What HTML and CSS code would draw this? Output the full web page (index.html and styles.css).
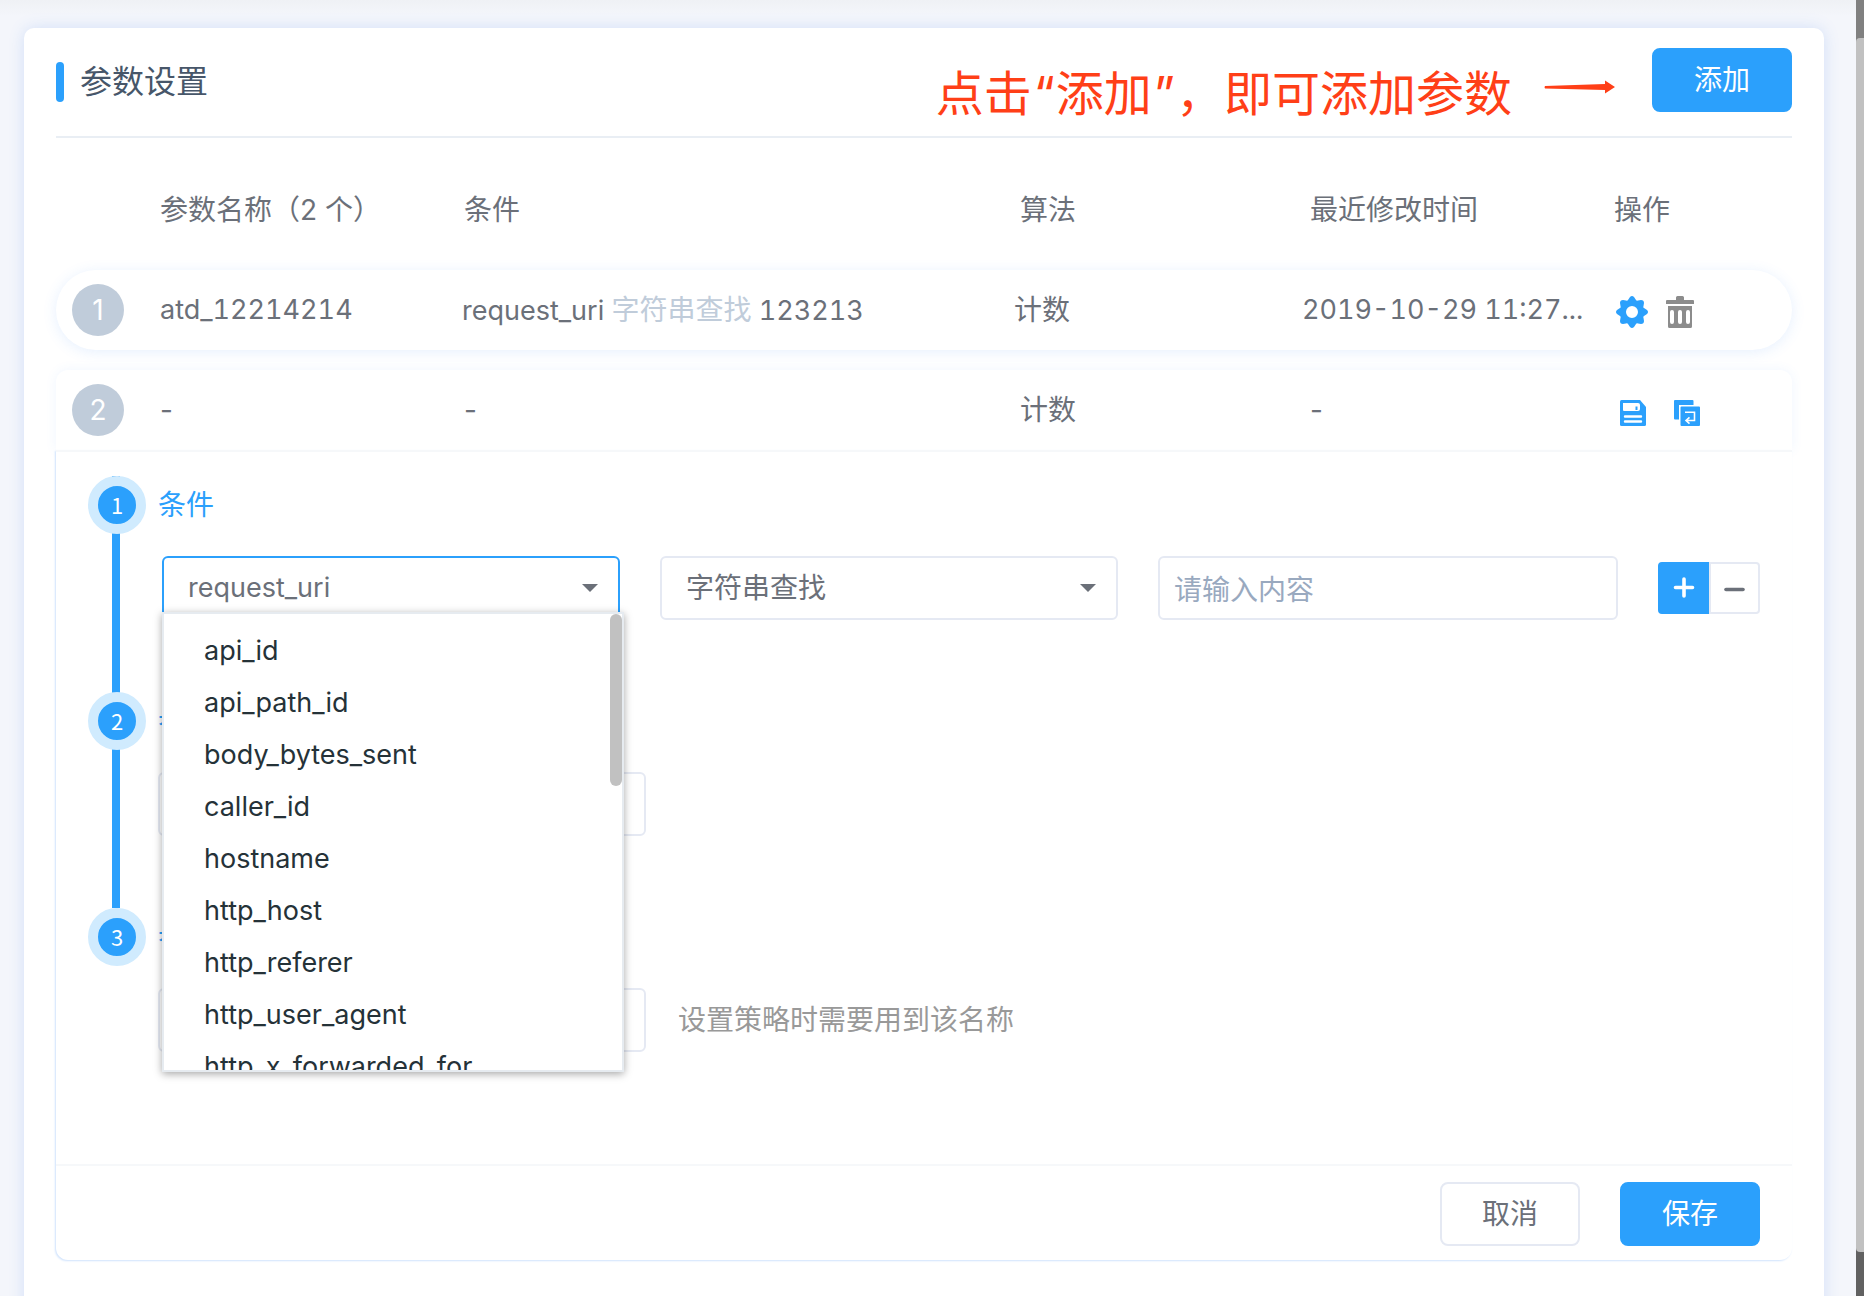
FILE: index.html
```html
<!DOCTYPE html>
<html lang="zh-CN">
<head>
<meta charset="utf-8">
<meta name="viewport" content="width=device-width, initial-scale=1">
<title>参数设置</title>
<link rel="stylesheet" href="styles.css">
</head>
<body>
<main class="page">
  <section class="card">
    <header class="card-header">
      <h1 class="card-title">参数设置</h1>
      <p class="callout">
        <span>点击<span class="quote">“</span>添加<span class="quote">”</span>，即可添加参数</span>
        <svg class="callout-arrow" width="72" height="14" viewBox="0 0 72 14" aria-hidden="true"><path d="M1 6 L61 4 V0.500 L71 7 L61 13.500 V10 L1 8.500 Q0 7 1 6Z" fill="#ff3f17"/></svg>
      </p>
      <button class="btn btn-primary" type="button">添加</button>
    </header>

    <table class="params">
      <thead>
        <tr class="row row-head">
          <td></td>
          <th scope="col">参数名称（2 个）</th>
          <th scope="col">条件</th>
          <th scope="col">算法</th>
          <th scope="col">最近修改时间</th>
          <th scope="col">操作</th>
        </tr>
      </thead>
      <tbody>
        <tr class="row row-saved">
          <td><span class="index">1</span></td>
          <td class="value">atd_12214214</td>
          <td class="value">request_uri <span class="operator">字符串查找</span> 123213</td>
          <td>计数</td>
          <td class="value">2019-10-29 11:27...</td>
          <td class="actions actions-saved">
            <button class="icon-btn" type="button" aria-label="设置">
              <svg width="32" height="32" viewBox="0 0 32 32"><path fill="#2ba0fc" fill-rule="evenodd" d="M14 1Q16-1 18 1L20 4Q20.500 5 22 4.500L25 4Q28 4 28 7L27.500 10Q27 11.500 28 12L31 14Q33 16 31 18L28 20Q27 20.500 27.500 22L28 25Q28 28 25 28L22 27.500Q20.500 27 20 28L18 31Q16 33 14 31L12 28Q11.500 27 10 27.500L7 28Q4 28 4 25L4.500 22Q5 20.500 4 20L1 18Q-1 16 1 14L4 12Q5 11.500 4.500 10L4 7Q4 4 7 4L10 4.500Q11.500 5 12 4ZM16 10a6 6 0 1 0 0 12a6 6 0 1 0 0-12Z"/></svg>
            </button>
            <button class="icon-btn" type="button" aria-label="删除">
              <svg width="28" height="32" viewBox="0 0 28 32"><path fill="#8c8c8c" fill-rule="evenodd" d="M10 4V1.500Q10 0 11.500 0H16.500Q18 0 18 1.500V4H27Q28 4 28 5V8H0V5Q0 4 1 4ZM2 10H26V30.500Q26 32 24.500 32H3.500Q2 32 2 30.500ZM4 16V26a2 2 0 0 0 4 0V16a2 2 0 0 0-4 0ZM12 16V26a2 2 0 0 0 4 0V16a2 2 0 0 0-4 0ZM20 16V26a2 2 0 0 0 4 0V16a2 2 0 0 0-4 0Z"/></svg>
            </button>
          </td>
        </tr>
        <tr class="row row-editing">
          <td><span class="index">2</span></td>
          <td>-</td>
          <td>-</td>
          <td>计数</td>
          <td>-</td>
          <td class="actions actions-editing">
            <button class="icon-btn" type="button" aria-label="保存参数">
              <svg width="26" height="26" viewBox="0 0 26 26"><path fill="#2ba0fc" d="M1.500 0H20L26 7V24.500Q26 26 24.500 26H1.500Q0 26 0 24.500V1.500Q0 0 1.500 0Z"/><path fill="#fff" d="M3 3H18Q20 3 20 5V9Q20 11 18 11H4Q3 11 3 10Z"/><path fill="#2ba0fc" d="M15.500 6.500H17.500V10H15.500Z"/><path stroke="#fff" stroke-width="2.400" stroke-linecap="round" d="M5 16.500H21M5 21.500H21"/></svg>
            </button>
            <button class="icon-btn" type="button" aria-label="还原">
              <svg width="26" height="26" viewBox="0 0 26 26"><path fill="#2ba0fc" d="M1 0H18.500Q19.500 0 19.500 1V5H5V19.500H1Q0 19.500 0 18.500V1Q0 0 1 0ZM7.500 6.500H25Q26 6.500 26 7.500V25Q26 26 25 26H7.500Q6.500 26 6.500 25V7.500Q6.500 6.500 7.500 6.500Z"/><path fill="none" stroke="#fff" stroke-width="1.600" d="M11 12.300H20.500V20.500H12.500M15.500 17.300L12 20.500L15.500 23.700"/></svg>
            </button>
          </td>
        </tr>
        <tr class="editor-row">
          <td class="editor" colspan="6">
            <form class="editor-form">
              <ol class="steps">
                <li class="step">
                  <div class="rail"><span class="step-number">1</span></div>
                  <div class="step-body">
                    <h2 class="step-title">条件</h2>
                    <div class="condition">
                      <div class="select">
                        <select class="control control-open" aria-label="字段"><option>request_uri</option></select>
                        <div class="dropdown">
                          <ul class="options" role="listbox" aria-label="字段选项">
                            <li class="option" role="option">api_id</li>
                            <li class="option" role="option">api_path_id</li>
                            <li class="option" role="option">body_bytes_sent</li>
                            <li class="option" role="option">caller_id</li>
                            <li class="option" role="option">hostname</li>
                            <li class="option" role="option">http_host</li>
                            <li class="option" role="option">http_referer</li>
                            <li class="option" role="option">http_user_agent</li>
                            <li class="option" role="option">http_x_forwarded_for</li>
                          </ul>
                          <span class="dropdown-thumb"></span>
                        </div>
                      </div>
                      <div class="select">
                        <select class="control" aria-label="匹配方式"><option>字符串查找</option></select>
                      </div>
                      <input class="control control-text" type="text" placeholder="请输入内容" aria-label="内容">
                      <div class="stepper">
                        <button class="stepper-btn stepper-add" type="button" aria-label="增加条件"><svg width="22" height="22" viewBox="0 0 22 22"><path stroke="#fff" stroke-width="3.600" stroke-linecap="round" d="M11 2V19M2.500 10.500H19.500"/></svg></button>
                        <button class="stepper-btn stepper-remove" type="button" aria-label="减少条件"><svg width="22" height="22" viewBox="0 0 22 22"><path stroke="#6b7079" stroke-width="3.600" stroke-linecap="round" d="M2 12.500H19"/></svg></button>
                      </div>
                    </div>
                  </div>
                </li>
                <li class="step">
                  <div class="rail"><span class="step-number">2</span></div>
                  <div class="step-body">
                    <h2 class="step-title">参数算法</h2>
                    <div class="field">
                      <div class="select field-control"><select class="control" aria-label="参数算法"><option>计数</option></select></div>
                    </div>
                  </div>
                </li>
                <li class="step">
                  <div class="rail"><span class="step-number">3</span></div>
                  <div class="step-body">
                    <h2 class="step-title">参数名称</h2>
                    <div class="field">
                      <input class="control field-control" type="text" aria-label="参数名称">
                      <span class="hint">设置策略时需要用到该名称</span>
                    </div>
                  </div>
                </li>
              </ol>
              <footer class="editor-footer">
                <button class="btn btn-plain" type="button">取消</button>
                <button class="btn btn-primary" type="submit">保存</button>
              </footer>
            </form>
          </td>
        </tr>
      </tbody>
    </table>
  </section>
</main>
<div class="scrollbar"><span class="scrollbar-thumb"></span></div>
</body>
</html>
```
FILE: styles.css
```css
:root {
  --blue: #2ba0fc;
  --text: #6b7079;
  --border: #e5e9f3;
  --muted: #c0ccda;
}

* {
  box-sizing: border-box;
}

body {
  margin: 0;
  background: #f4f6fb;
  color: var(--text);
  font-family: Inter, "Noto Sans CJK SC", sans-serif;
  font-size: 28px;
  line-height: 40px;
}

h1, h2, p, ol, ul {
  margin: 0;
  padding: 0;
  font-weight: 400;
  list-style: none;
}

button, input, select {
  font: inherit;
  color: inherit;
}

.page {
  height: 100vh;
  overflow: hidden;
  padding: 28px 40px 0 24px;
  background: linear-gradient(#eff1f5, #f4f6fb 16px);
}

.card {
  padding: 0 32px 64px;
  border-radius: 10px;
  background: #fff;
  box-shadow: 0 0 16px rgba(64, 128, 240, 0.18);
}

.card-header {
  display: flex;
  align-items: center;
  height: 110px;
  border-bottom: 2px solid #e9eef4;
}

.card-title {
  display: flex;
  align-items: center;
  gap: 16px;
  color: #475669;
  font-size: 32px;
  line-height: 42px;
}

.card-title::before {
  content: "";
  width: 8px;
  height: 40px;
  border-radius: 4px;
  background: var(--blue);
}

.callout {
  display: flex;
  align-items: center;
  gap: 32px;
  margin: 20px 36px 0 auto;
  color: #ff3f17;
  font-family: "Noto Sans CJK SC", sans-serif;
  font-size: 48px;
  line-height: 64px;
}

.quote {
  padding: 0 1px 0 2px;
  font-family: Inter, sans-serif;
}

.callout-arrow {
  margin-top: -10px;
}

.btn {
  width: 140px;
  height: 64px;
  padding: 0;
  border: 2px solid var(--blue);
  border-radius: 8px;
}

.btn-primary {
  background: var(--blue);
  color: #fff;
}

.btn-plain {
  border-color: var(--border);
  background: #fff;
}

.card-header .btn {
  margin-bottom: 4px;
}

.params,
.params thead,
.params tbody,
.editor-row,
.editor {
  display: block;
}

.row {
  display: grid;
  grid-template-columns: 104px 304fr 556fr 290fr 304fr 178fr;
  align-items: center;
  height: 80px;
}

.row td,
.row th {
  padding: 0;
  font-weight: 400;
  text-align: left;
  white-space: nowrap;
}

.row-head {
  height: 132px;
  padding-top: 12px;
}

.row-saved {
  grid-template-columns: 104px 302fr 552fr 288fr 314fr 176fr;
  margin-bottom: 20px;
  border-radius: 40px;
  background: #fff;
  box-shadow: 0 2px 14px rgba(64, 140, 250, 0.13);
}

.row-editing {
  border-radius: 12px 12px 0 0;
  background: #fff;
  box-shadow: 0 0 12px rgba(64, 140, 250, 0.08);
}

.index {
  display: block;
  width: 52px;
  margin-left: 16px;
  border-radius: 50%;
  background: var(--muted);
  color: #fff;
  line-height: 52px;
  text-align: center;
}

.value {
  font-size: 27px;
  font-variant-numeric: tabular-nums;
}

.operator {
  color: var(--muted);
  font-size: 28px;
}

.row .actions {
  display: flex;
  padding-top: 4px;
}

.actions-saved {
  gap: 18px;
}

.row .actions-editing {
  gap: 28px;
  padding-top: 6px;
  padding-left: 6px;
}

.icon-btn {
  display: flex;
  padding: 0;
  border: 0;
  background: none;
}

.editor-row {
  position: relative;
}

.editor {
  padding: 0;
  border-top: 2px solid #f6f8fa;
  border-radius: 0 0 12px 12px;
  background: #fff;
  box-shadow: -1px 1px 2px #d0e3fd;
}

.steps {
  padding: 24px 32px 40px;
}

.step {
  display: flex;
  gap: 12px;
  height: 216px;
}

.rail {
  width: 58px;
}

.step:not(:last-child) .rail {
  background: linear-gradient(var(--blue), var(--blue)) 24px 0 / 8px 100% no-repeat;
}

.step-number {
  display: block;
  width: 58px;
  height: 58px;
  border: 10px solid #d0ebfe;
  border-radius: 50%;
  background: var(--blue);
  color: #fff;
  font-family: "Noto Sans CJK SC", sans-serif;
  font-size: 22px;
  line-height: 36px;
  text-align: center;
}

.step-body {
  flex: 1;
}

.step-title {
  height: 80px;
  color: var(--blue);
  font-size: 28px;
  line-height: 58px;
}

.condition {
  display: grid;
  grid-template-columns: 458fr 458fr 460fr 102px;
  align-items: center;
  gap: 40px;
  margin-left: 4px;
}

.select {
  position: relative;
}

.select::after {
  content: "";
  position: absolute;
  top: 28px;
  right: 22px;
  border: 8px solid transparent;
  border-top-color: var(--text);
  border-bottom: 0;
  pointer-events: none;
}

.control {
  display: block;
  width: 100%;
  height: 64px;
  padding: 0 24px;
  border: 2px solid var(--border);
  border-radius: 6px;
  background: #fff;
  appearance: none;
  outline: none;
}

.control-open {
  border-color: var(--blue);
  font-size: 27px;
}

.control-text {
  padding: 4px 14px 0;
}

.control-text::placeholder {
  color: #99a9bf;
}

.dropdown {
  position: absolute;
  top: 56px;
  left: 0;
  right: -4px;
  z-index: 2;
  height: 460px;
  overflow: hidden;
  border: 2px solid #e6ebf0;
  background: #fff;
  box-shadow: 0 2px 8px rgba(0, 0, 0, 0.35);
}

.options {
  padding: 11px 0;
}

.option {
  padding-left: 40px;
  color: #253238;
  font-size: 27px;
  line-height: 52px;
}

.dropdown-thumb {
  position: absolute;
  top: 0;
  right: 0;
  width: 12px;
  height: 172px;
  border-radius: 6px;
  background: #c1c1c1;
}

.stepper {
  display: flex;
}

.stepper-btn {
  display: flex;
  flex: 1;
  align-items: center;
  justify-content: center;
  height: 52px;
  padding: 0;
  border: 2px solid var(--border);
  border-radius: 0 4px 4px 0;
  background: #fff;
}

.stepper-add {
  border-color: var(--blue);
  border-radius: 4px 0 0 4px;
  background: var(--blue);
}

.field {
  display: flex;
  align-items: center;
  gap: 32px;
}

.field-control {
  flex: 0 0 488px;
  width: 488px;
}

.hint {
  color: #999;
}

.editor-footer {
  display: flex;
  justify-content: flex-end;
  gap: 40px;
  padding: 16px 32px 14px;
  border-top: 2px solid #f6f8fa;
}

.scrollbar {
  position: fixed;
  top: 0;
  right: 0;
  bottom: 0;
  width: 8px;
  background: linear-gradient(#808080 50%, #616161 50%);
}

.scrollbar-thumb {
  position: absolute;
  inset: 38px 0 44px;
  border-radius: 4px 0 0 4px;
  background: #c1c1c1;
}
```
